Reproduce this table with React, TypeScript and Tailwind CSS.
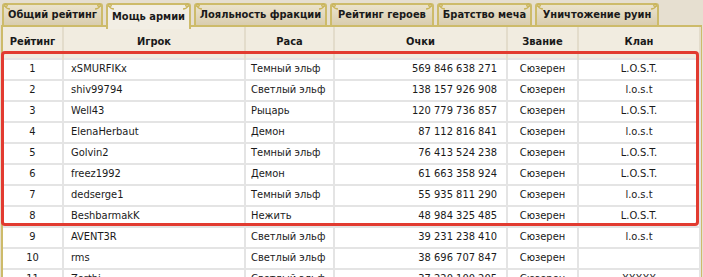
import React from 'react';

const tabs = [
  { label: 'Общий рейтинг', w: 'w-[101px]' },
  { label: 'Мощь армии', w: 'w-[85px]', active: true },
  { label: 'Лояльность фракции', w: 'w-[133px]' },
  { label: 'Рейтинг героев', w: 'w-[104px]' },
  { label: 'Братство меча', w: 'w-[95px]' },
  { label: 'Уничтожение руин', w: 'w-[124px]' },
];

const rows = [
  ['1', 'xSMURFIKx', 'Темный эльф', '569 846 638 271', 'Сюзерен', 'L.O.S.T.'],
  ['2', 'shiv99794', 'Светлый эльф', '138 157 926 908', 'Сюзерен', 'l.o.s.t'],
  ['3', 'Well43', 'Рыцарь', '120 779 736 857', 'Сюзерен', 'L.O.S.T.'],
  ['4', 'ElenaHerbaut', 'Демон', '87 112 816 841', 'Сюзерен', 'l.o.s.t'],
  ['5', 'Golvin2', 'Темный эльф', '76 413 524 238', 'Сюзерен', 'L.O.S.T.'],
  ['6', 'freez1992', 'Демон', '61 663 358 924', 'Сюзерен', 'L.O.S.T.'],
  ['7', 'dedserge1', 'Темный эльф', '55 935 811 290', 'Сюзерен', 'l.o.s.t'],
  ['8', 'BeshbarmakK', 'Нежить', '48 984 325 485', 'Сюзерен', 'L.O.S.T.'],
  ['9', 'AVENT3R', 'Светлый эльф', '39 231 238 410', 'Сюзерен', 'l.o.s.t'],
  ['10', 'rms', 'Светлый эльф', '38 696 707 847', 'Сюзерен', ''],
  ['11', 'Zorthi', 'Светлый эльф', '37 220 100 205', 'Сюзерен', 'XXXXX'],
];

const Curl = ({ flip }: { flip?: boolean }) => (
  <svg
    width="9"
    height="8"
    viewBox="0 0 9 8"
    className={`absolute -top-[2px] ${flip ? '-left-[2px] -scale-x-100' : '-right-[2px]'}`}
  >
    <path d="M1 6 C3 6 5 5 6 3 C7 1 5 0 4 2 C3 3 5 4 7 3" fill="none" stroke="#c9b45a" strokeWidth="1.3" />
  </svg>
);

const App = () => {
  return (
    <div className="w-[703px] h-[277px] overflow-hidden bg-[#e6dfd0] text-[11px] text-[#1a1a1a] font-['DejaVu_Sans_Condensed','DejaVu_Sans',sans-serif]">
      <div className="flex gap-[3px] pl-[2px] pt-[3px] h-[25px] items-start">
        {tabs.map((t) => (
          <div
            key={t.label}
            className={`relative ${t.w} shrink-0 flex items-center justify-center font-bold whitespace-nowrap border-2 border-b-0 rounded-t-[3px] border-[#cdbb6a] ${
              t.active
                ? 'bg-[#f2eee4] h-[26px] z-10'
                : 'bg-gradient-to-b from-[#ebe3cc] to-[#d8ccae] h-[23px]'
            }`}
          >
            <Curl flip />
            <Curl />
            <span>{t.label}</span>
          </div>
        ))}
      </div>
      <div className="relative ml-[1px] w-[701px] border-x-2 border-t-2 border-[#cdbb6a] bg-white">
        <table className="w-[697px] border-collapse table-fixed">
          <colgroup>
            <col className="w-[60px]" />
            <col className="w-[182px]" />
            <col className="w-[89px]" />
            <col className="w-[173px]" />
            <col className="w-[71px]" />
            <col className="w-[122px]" />
          </colgroup>
          <thead>
            <tr className="h-[32px] bg-[#f1ece0]">
              {['Рейтинг', 'Игрок', 'Раса', 'Очки', 'Звание', 'Клан'].map((h) => (
                <th key={h} className="font-bold text-center border-x-2 border-[#e3dccb] first:border-l-0">
                  {h}
                </th>
              ))}
            </tr>
          </thead>
          <tbody>
            {rows.map((r) => (
              <tr key={r[0]} className="h-[21px]">
                <td className="text-center border-2 border-l-0 border-[#e4e4e4]">{r[0]}</td>
                <td className="pl-[7px] border-2 border-[#e4e4e4]">{r[1]}</td>
                <td className="pl-[5px] border-2 border-[#e4e4e4] whitespace-nowrap">{r[2]}</td>
                <td className="text-right pr-[9px] border-2 border-[#e4e4e4]">{r[3]}</td>
                <td className="text-center border-2 border-[#e4e4e4]">{r[4]}</td>
                <td className="text-center border-2 border-[#e4e4e4]">{r[5]}</td>
              </tr>
            ))}
          </tbody>
        </table>
        <div className="absolute left-[-2px] top-[24px] w-[698px] h-[175px] border-[3px] border-[#e23b30] rounded-[4px] pointer-events-none" />
      </div>
    </div>
  );
};

export default App;
